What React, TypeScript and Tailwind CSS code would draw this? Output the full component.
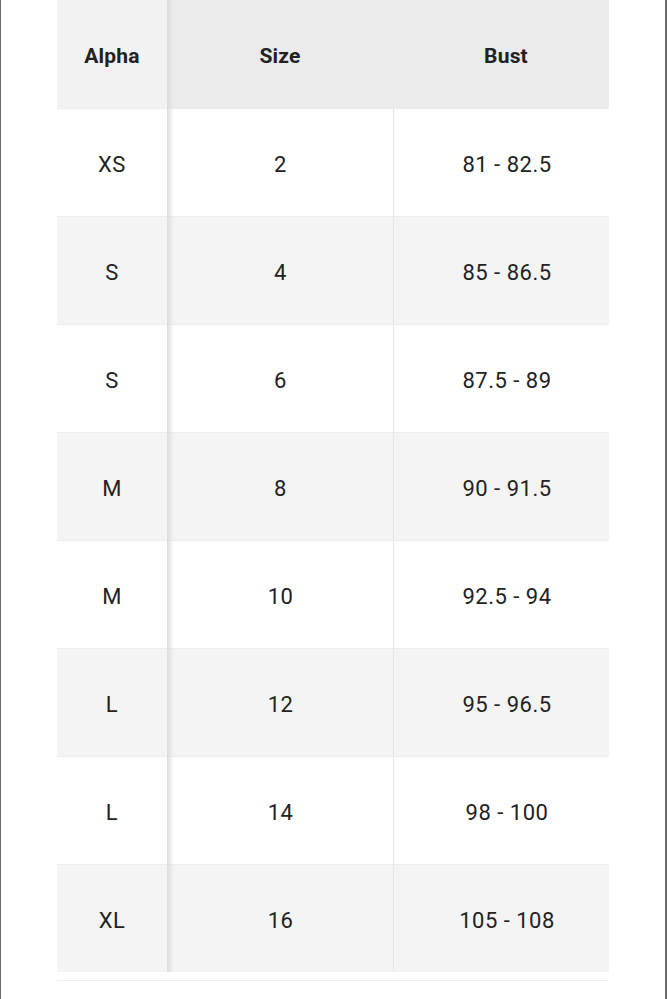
import React from "react";

const rows: [string, string, string][] = [
  ["XS", "2", "81 - 82.5"],
  ["S", "4", "85 - 86.5"],
  ["S", "6", "87.5 - 89"],
  ["M", "8", "90 - 91.5"],
  ["M", "10", "92.5 - 94"],
  ["L", "12", "95 - 96.5"],
  ["L", "14", "98 - 100"],
  ["XL", "16", "105 - 108"],
];

export default function App() {
  return (
    <div
      className="w-[667px] h-[999px] bg-white border-l-[1px] border-r-[2px] border-[#6b6b6b] overflow-hidden text-[#222222]"
      style={{ fontFamily: "Roboto, 'Liberation Sans', sans-serif" }}
    >
      <div className="ml-[56px] w-[552px] flex flex-col overflow-hidden">
        <div className="flex h-[108px]">
          <div className="relative w-[110px] shrink-0 bg-[#f2f2f2] flex items-center justify-center pt-[5px] text-[21px] font-bold tracking-[0.2px]">
            Alpha
            <div className="absolute top-0 right-[-7px] w-[7px] h-full bg-gradient-to-r from-[#dcdcdc] to-transparent" />
          </div>
          <div className="w-[226px] shrink-0 bg-[#ebebeb] flex items-center justify-center pt-[5px] text-[21px] font-bold tracking-[0.2px]">
            Size
          </div>
          <div className="w-[226px] shrink-0 bg-[#ebebeb] flex items-center justify-center pt-[5px] text-[21px] font-bold tracking-[0.2px]">
            Bust
          </div>
        </div>
        {rows.map((r, i) => {
          const gray = i % 2 === 1;
          return (
            <div
              key={i}
              className={`flex h-[108px] border-t border-[#ececec] ${gray ? "bg-[#f4f4f4]" : "bg-white"}`}
            >
              <div className="relative w-[110px] shrink-0 flex items-center justify-center pt-[4px] text-[22px] tracking-[0.5px]">
                {r[0]}
                <div className="absolute top-[-1px] right-[-7px] w-[7px] h-[calc(100%+1px)] bg-gradient-to-r from-[#dcdcdc] to-transparent" />
              </div>
              <div className="w-[227px] shrink-0 border-r border-[#e6e6e6] flex items-center justify-center pt-[4px] pl-[1px] text-[22px] tracking-[0.5px]">
                {r[1]}
              </div>
              <div className="w-[226px] shrink-0 flex items-center justify-center pt-[4px] text-[22px] tracking-[0.5px]">
                {r[2]}
              </div>
            </div>
          );
        })}
        <div className="mt-[8px] h-px bg-[#ededed]" />
      </div>
    </div>
  );
}
